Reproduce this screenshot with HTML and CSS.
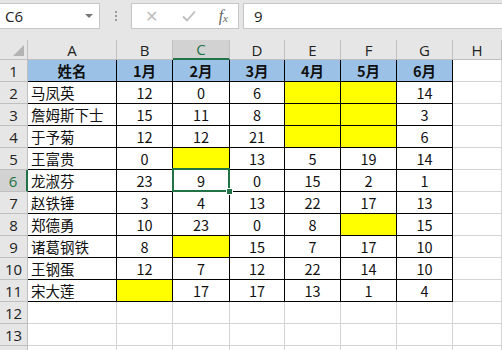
FILE: index.html
```html
<!DOCTYPE html>
<html lang="zh">
<head>
    <meta charset="UTF-8">
    <title>Sheet</title>
    <link rel="stylesheet" href="styles.css">
</head>
<body>
    <div class="toolbar">
        <div class="name-box">
            <span>C6</span>
            <span class="drop"></span>
        </div>
        <div class="grip"><i></i><i></i><i></i></div>
        <div class="fx-tools">
            <span class="tool cancel">✕</span>
            <span class="tool ok">
                <svg width="14" height="12" viewBox="0 0 14 12"><path d="M1 6.5 L5 10.5 L13 1.5" fill="none" stroke="#bdbdbd" stroke-width="1.8"/></svg>
            </span>
            <span class="tool fx">f<sub>x</sub></span>
        </div>
        <div class="formula">9</div>
    </div>
    <div id="sheet" class="sheet"></div>
    <script>
        const cols = ['A', 'B', 'C', 'D', 'E', 'F', 'G', 'H'];
        const Y = null; // yellow, empty
        const data = [
            ['姓名', '1月', '2月', '3月', '4月', '5月', '6月'],
            ['马凤英', 12, 0, 6, Y, Y, 14],
            ['詹姆斯下士', 15, 11, 8, Y, Y, 3],
            ['于予菊', 12, 12, 21, Y, Y, 6],
            ['王富贵', 0, Y, 13, 5, 19, 14],
            ['龙淑芬', 23, 9, 0, 15, 2, 1],
            ['赵铁锤', 3, 4, 13, 22, 17, 13],
            ['郑德勇', 10, 23, 0, 8, Y, 15],
            ['诸葛钢铁', 8, Y, 15, 7, 17, 10],
            ['王钢蛋', 12, 7, 12, 22, 14, 10],
            ['宋大莲', Y, 17, 17, 13, 1, 4]
        ];
        const sheet = document.getElementById('sheet');

        function cell(cls, text) {
            const el = document.createElement('div');
            el.className = 'cell ' + cls;
            if (text !== undefined && text !== null) el.textContent = text;
            sheet.appendChild(el);
            return el;
        }

        cell('corner');
        cols.forEach(c => cell(c === 'C' ? 'col-head active' : 'col-head', c));

        // row 14 only peeks in at the bottom edge, its number stays hidden
        for (let r = 1; r <= 14; r++) {
            cell(r === 6 ? 'row-head active' : 'row-head', r < 14 ? r : '');
            const row = data[r - 1];
            for (let c = 0; c < cols.length; c++) {
                if (!row || c === 7) {
                    cell('blank');
                    continue;
                }
                let cls = 'data';
                if (r === 1) cls += ' head';
                else if (c === 0) cls += ' name';
                if (row[c] === null) cls += ' yellow';
                if (r === 6 && c === 2) cls += ' sel';
                cell(cls, row[c]);
            }
        }
    </script>
</body>
</html>
```
FILE: styles.css
```css
body {
    margin: 0;
    background-color: #ffffff;
    font-family: "Noto Sans CJK SC", "Open Sans", sans-serif;
    overflow: hidden;
}
.toolbar {
    display: flex;
    align-items: flex-start;
    height: 40px;
    padding-top: 3px;
    box-sizing: border-box;
    background-color: #e6e6e6;
}
.name-box {
    display: flex;
    align-items: center;
    justify-content: space-between;
    width: 100px;
    height: 26px;
    box-sizing: border-box;
    padding: 0 6px 0 5px;
    background-color: #ffffff;
    border: 1px solid #c6c6c6;
    border-left: none;
    font-family: "Open Sans", sans-serif;
    font-size: 15px;
    color: #222;
}
.drop {
    width: 0;
    height: 0;
    border-left: 4px solid transparent;
    border-right: 4px solid transparent;
    border-top: 4px solid #777;
}
.grip {
    display: flex;
    flex-direction: column;
    gap: 2px;
    margin: 8px 14px 0 15px;
}
.grip i {
    width: 2px;
    height: 2px;
    background-color: #9a9a9a;
}
.fx-tools {
    display: flex;
    align-items: center;
    justify-content: space-between;
    width: 108px;
    height: 26px;
    box-sizing: border-box;
    padding: 0 10px 0 13px;
    background-color: #ffffff;
    border: 1px solid #c6c6c6;
    margin-right: 4px;
}
.tool {
    color: #bdbdbd;
    font-size: 16px;
    font-family: "DejaVu Sans", sans-serif;
}
.ok {
    display: flex;
}
.fx {
    color: #666;
    font-family: "Liberation Serif", serif;
    font-style: italic;
    font-size: 16px;
}
.fx sub {
    font-size: 11px;
    vertical-align: -1px;
}
.formula {
    flex: 1;
    height: 26px;
    box-sizing: border-box;
    padding-left: 10px;
    background-color: #ffffff;
    border: 1px solid #c6c6c6;
    border-right: none;
    font-family: "Open Sans", sans-serif;
    font-size: 15px;
    line-height: 24px;
    color: #222;
}
.sheet {
    display: grid;
    grid-template-columns: 28px 89px 56px 57px 55px 56px 56px 56px 1fr;
    grid-template-rows: 20px repeat(14, 22px);
}
.cell {
    box-sizing: border-box;
    border-right: 1px solid #d4d4d4;
    border-bottom: 1px solid #d4d4d4;
    display: flex;
    align-items: center;
    justify-content: center;
    font-size: 14.5px;
    color: #111;
    white-space: nowrap;
}
.corner, .col-head, .row-head {
    background-color: #e6e6e6;
    border-color: #bfbfbf;
    font-family: "Open Sans", sans-serif;
    font-size: 15px;
    color: #222;
}
.corner {
    position: relative;
}
.corner::after {
    content: '';
    position: absolute;
    right: 3px;
    bottom: 3px;
    width: 0;
    height: 0;
    border-left: 11px solid transparent;
    border-bottom: 11px solid #b4b4b4;
}
.col-head.active {
    background-color: #d2d2d2;
    border-bottom: 2px solid #217346;
    color: #217346;
}
.row-head.active {
    background-color: #d2d2d2;
    border-right: 2px solid #217346;
    color: #217346;
}
.data {
    border-color: #000000;
}
.head {
    background-color: #9bc2e6;
    font-weight: bold;
}
.name {
    justify-content: flex-start;
    padding-left: 3px;
}
.yellow {
    background-color: #ffff00;
}
.sel {
    position: relative;
}
.sel::before {
    content: '';
    position: absolute;
    left: -1px;
    top: -2px;
    right: -1px;
    bottom: -1px;
    border: 2px solid #217346;
}
.sel::after {
    content: '';
    position: absolute;
    right: -4px;
    bottom: -4px;
    width: 5px;
    height: 5px;
    background-color: #217346;
    border: 1px solid #ffffff;
}
```
